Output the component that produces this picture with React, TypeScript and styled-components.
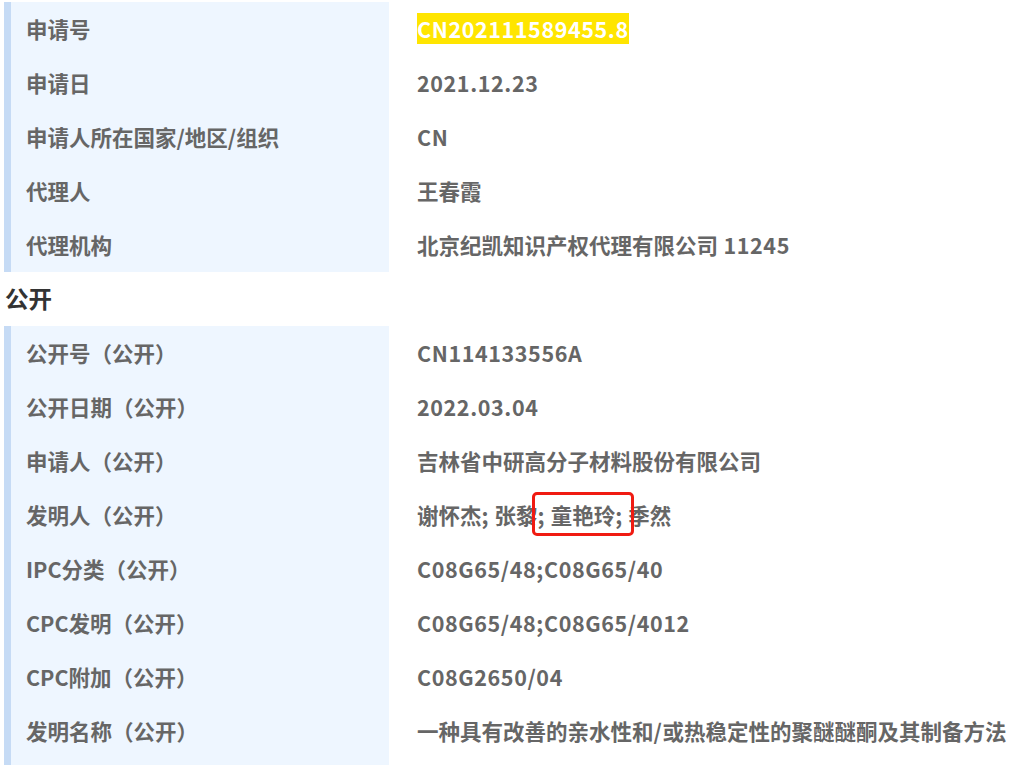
import React from 'react';
import styled, {createGlobalStyle} from 'styled-components';

const GlobalStyle = createGlobalStyle`
    html, body {
        margin:0;
        padding:0;
        background:#ffffff;
    }
    body {
        font-family:"Noto Sans CJK SC", "Noto Sans", sans-serif;
    }
`

const Page = styled.div`
    padding:2px 4px 0 4px;
    width:1028px;
    box-sizing:border-box;
    height:765px;
    overflow:hidden;
`

const Table = styled.div`
    display:grid;
    grid-template-columns:385px 1fr;
`

const Label = styled.div`
    height:54px;
    display:flex;
    align-items:center;
    box-sizing:border-box;
    background:#eef6ff;
    border-left:7px solid #c6dbf5;
    padding:0 0 2px 15px;
    font-size:21.5px;
    font-weight:700;
    color:#666666;
    white-space:nowrap;
`

const Value = styled.div`
    height:54px;
    display:flex;
    align-items:center;
    box-sizing:border-box;
    padding:0 0 2px 28px;
    font-size:21.5px;
    font-weight:700;
    color:#666666;
    white-space:pre;
`

const Latin = styled.span`
    letter-spacing:0.6px;
`

const Highlight = styled.span`
    background:#ffe500;
    color:#ffffff;
`

const Marked = styled.span`
    position:relative;
    &::after{
        content:"";
        position:absolute;
        left:-19px;
        right:-11px;
        top:-7px;
        bottom:-6px;
        border:3px solid #f01b12;
        border-radius:5px;
    }
`

const Heading = styled.div`
    height:54px;
    display:flex;
    align-items:center;
    box-sizing:border-box;
    padding:0 0 2px 1px;
    font-size:23.5px;
    font-weight:700;
    color:#333333;
`

// latin runs get a bit of extra tracking, cjk runs stay as they are
function Text({children}: { children: string }) {
    const parts = children.split(/([\u0000-\u024f]+)/).filter(p => p !== '')
    return <>{parts.map((p, i) => /[\u4e00-\u9fff\uff00-\uffef]/.test(p) ? <span key={i}>{p}</span> :
        <Latin key={i}>{p}</Latin>)}</>
}

type Row = { label: string, value: React.ReactNode }

const applyRows: Row[] = [
    {label: '申请号', value: <Highlight><Text>CN202111589455.8</Text></Highlight>},
    {label: '申请日', value: <Text>2021.12.23</Text>},
    {label: '申请人所在国家/地区/组织', value: <Text>CN</Text>},
    {label: '代理人', value: '王春霞'},
    {label: '代理机构', value: <Text>北京纪凯知识产权代理有限公司 11245</Text>},
]

const publishRows: Row[] = [
    {label: '公开号（公开）', value: <Text>CN114133556A</Text>},
    {label: '公开日期（公开）', value: <Text>2022.03.04</Text>},
    {label: '申请人（公开）', value: '吉林省中研高分子材料股份有限公司'},
    {label: '发明人（公开）', value: <>谢怀杰<Latin>; </Latin>张黎<Latin>; </Latin><Marked>童艳玲<Latin>;</Latin></Marked><Latin> </Latin>季然</>},
    {label: 'IPC分类（公开）', value: <Text>C08G65/48;C08G65/40</Text>},
    {label: 'CPC发明（公开）', value: <Text>C08G65/48;C08G65/4012</Text>},
    {label: 'CPC附加（公开）', value: <Text>C08G2650/04</Text>},
    {label: '发明名称（公开）', value: <Text>一种具有改善的亲水性和/或热稳定性的聚醚醚酮及其制备方法</Text>},
    {label: '', value: ''},
]

function Section({rows}: { rows: Row[] }) {
    return (
        <Table>
            {rows.map((row, index) => (
                <React.Fragment key={index}>
                    <Label>{row.label}</Label>
                    <Value><span>{row.value}</span></Value>
                </React.Fragment>
            ))}
        </Table>
    )
}

function App() {
    return (
        <Page>
            <GlobalStyle/>
            <Section rows={applyRows}/>
            <Heading>公开</Heading>
            <Section rows={publishRows}/>
        </Page>
    );
}

export default App;
